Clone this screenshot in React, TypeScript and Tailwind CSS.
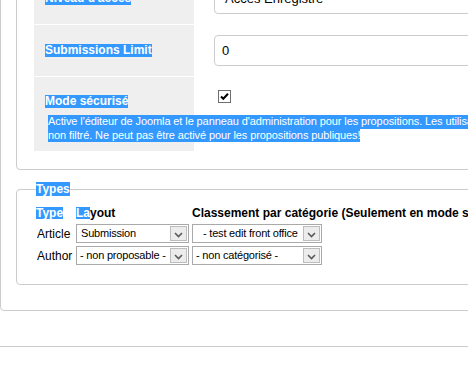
import React from "react";

function Chevron() {
  return (
    <svg width="9" height="6" viewBox="0 0 9 6" className="mt-[2px]">
      <polyline points="1,1 4.5,4.5 8,1" fill="none" stroke="#5a5a5a" strokeWidth="1.6" />
    </svg>
  );
}

function Sel({ text, widthClass, padClass }: { text: string; widthClass: string; padClass: string }) {
  return (
    <div className={`flex h-[19px] items-stretch border border-[#a9a9a9] bg-white ${widthClass}`}>
      <span className={`flex-1 overflow-hidden whitespace-nowrap text-[11px] leading-[17px] tracking-[-0.2px] text-black ${padClass}`}>{text}</span>
      <span className="my-px mr-px flex w-[17px] items-center justify-center border border-[#bdbdbd] bg-[#ececec]">
        <Chevron />
      </span>
    </div>
  );
}

function Hl({ children, cls }: { children: React.ReactNode; cls: string }) {
  return <span className={`inline-block bg-[#3399ff] text-white ${cls}`}>{children}</span>;
}

export default function App() {
  return (
    <div className="h-[373px] w-[468px] overflow-hidden bg-white text-black [font-family:'Liberation_Sans',Arial,sans-serif]">
      <div className="-mt-[50px] w-[640px] rounded-[4px] border border-[#cccccc] pb-[25px] pl-[15px] pt-[10px]">
        {/* fieldset 1 */}
        <div className="rounded-[4px] border border-[#cccccc] pb-[18px] pl-[17px] pt-[11px]">
          <div className="flex flex-col gap-[1px]">
            {/* row 1 */}
            <div className="flex">
              <div className="flex w-[160px] shrink-0 items-center bg-[#efefef] pl-[11px]">
                <Hl cls="text-[12px] font-bold leading-[13px]">Niveau d'accès</Hl>
              </div>
              <div className="py-[10px] pl-[20px]">
                <div className="flex h-[31px] w-[300px] items-center rounded-[4px] border border-[#cccccc] pl-[10px] text-[13px]">
                  Accès Enregistré
                </div>
              </div>
            </div>
            {/* row 2 */}
            <div className="flex">
              <div className="flex w-[160px] shrink-0 items-center bg-[#efefef] pl-[11px]">
                <Hl cls="text-[12px] font-bold leading-[13px]">Submissions Limit</Hl>
              </div>
              <div className="py-[10px] pl-[20px]">
                <div className="flex h-[31px] w-[300px] items-center rounded-[4px] border border-[#cccccc] pl-[7px] text-[13px]">
                  0
                </div>
              </div>
            </div>
            {/* row 3 */}
            <div className="flex">
              <div className="w-[160px] shrink-0 bg-[#efefef] pb-[9px] pl-[11px] pt-[18px]">
                <div className="flex h-[13px] text-[12px] leading-[13px]">
                  <Hl cls="font-bold leading-[13px]">Mode sécurisé</Hl>
                </div>
                <div className="mt-[7px] whitespace-nowrap pl-[3px] text-[11px] leading-[13.5px] tracking-[-0.1px]">
                  <div className="flex h-[13.5px]">
                    <Hl cls="leading-[13.5px]">
                      Active l'éditeur de Joomla et le panneau d'administration pour les propositions. Les utilisateurs pourront saisir du HTML
                    </Hl>
                  </div>
                  <div className="flex h-[13.5px]">
                    <Hl cls="leading-[13.5px]">non filtré. Ne peut pas être activé pour les propositions publiques!</Hl>
                  </div>
                </div>
              </div>
              <div className="pl-[24px] pt-[13px]">
                <div className="flex h-[13px] w-[13px] items-center justify-center border border-[#6f6f6f] bg-white">
                  <svg width="11" height="11" viewBox="0 0 11 11">
                    <path d="M2 5.5 L4.3 7.8 L9 2.8" fill="none" stroke="#000" strokeWidth="2" />
                  </svg>
                </div>
              </div>
            </div>
          </div>
        </div>

        {/* fieldset 2 */}
        <fieldset className="mt-[12px] rounded-[4px] border border-[#cccccc] pb-[19px] pl-[19px]">
          <legend className="text-[12px] font-bold leading-[14px]">
            <Hl cls="leading-[14px]">Types</Hl>
          </legend>
          <div className="mt-[11px] flex h-[12px] items-center whitespace-nowrap text-[12px] font-bold leading-[12px]">
            <div className="w-[40px]">
              <Hl cls="leading-[12px]">Type</Hl>
            </div>
            <div className="w-[116px]">
              <Hl cls="leading-[12px]">La</Hl>
              yout
            </div>
            <div>Classement par catégorie (Seulement en mode sécurisé)</div>
          </div>
          <div className="mt-[5px] flex items-center text-[12px]">
            <div className="w-[40px] pl-px">Article</div>
            <div className="w-[116px]">
              <Sel text="Submission" widthClass="w-[113px]" padClass="pl-[4px]" />
            </div>
            <Sel text="- test edit front office" widthClass="w-[130px]" padClass="pl-[10px]" />
          </div>
          <div className="mt-[3px] flex items-center text-[12px]">
            <div className="w-[40px] pl-px">Author</div>
            <div className="w-[116px]">
              <Sel text="- non proposable -" widthClass="w-[113px]" padClass="pl-[3px]" />
            </div>
            <Sel text="- non catégorisé -" widthClass="w-[130px]" padClass="pl-[3px]" />
          </div>
        </fieldset>
      </div>
      <div className="mt-[35px] h-px w-full bg-[#cccccc]" />
    </div>
  );
}
